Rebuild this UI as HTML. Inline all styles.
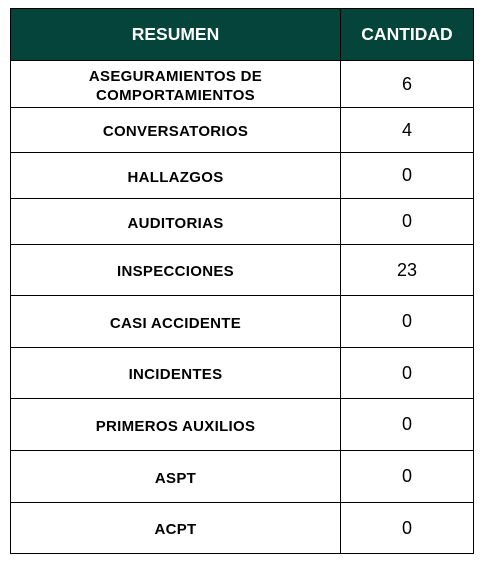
<!DOCTYPE html>
<html><head><style>
body{margin:0;width:486px;height:565px;background:#fff;font-family:"Liberation Sans",Arial,sans-serif;position:relative;overflow:hidden}
.h{position:absolute;top:8px;height:53px;background:#04443a;color:#fff;font-weight:bold;font-size:17.5px;display:flex;align-items:center;justify-content:center;box-sizing:border-box;border:1px solid #000}
.c{position:absolute;display:flex;align-items:center;justify-content:center;text-align:center;box-sizing:border-box;border:1px solid #000;color:#000}
.l{left:10px;width:331px;font-weight:bold;font-size:15px;line-height:19px;letter-spacing:0.3px;padding-top:3px}
.r{left:340px;width:134px;font-size:18px}
</style></head><body>
<div class="h" style="left:10px;width:331px">RESUMEN</div>
<div class="h" style="left:340px;width:134px">CANTIDAD</div>
<div class="c l" style="top:60px;height:48px">ASEGURAMIENTOS DE<br>COMPORTAMIENTOS</div><div class="c r" style="top:60px;height:48px">6</div>
<div class="c l" style="top:107px;height:46px">CONVERSATORIOS</div><div class="c r" style="top:107px;height:46px">4</div>
<div class="c l" style="top:152px;height:47px">HALLAZGOS</div><div class="c r" style="top:152px;height:47px">0</div>
<div class="c l" style="top:198px;height:47px">AUDITORIAS</div><div class="c r" style="top:198px;height:47px">0</div>
<div class="c l" style="top:244px;height:52px">INSPECCIONES</div><div class="c r" style="top:244px;height:52px">23</div>
<div class="c l" style="top:295px;height:53px">CASI ACCIDENTE</div><div class="c r" style="top:295px;height:53px">0</div>
<div class="c l" style="top:347px;height:52px">INCIDENTES</div><div class="c r" style="top:347px;height:52px">0</div>
<div class="c l" style="top:398px;height:53px">PRIMEROS AUXILIOS</div><div class="c r" style="top:398px;height:53px">0</div>
<div class="c l" style="top:450px;height:53px">ASPT</div><div class="c r" style="top:450px;height:53px">0</div>
<div class="c l" style="top:502px;height:52px">ACPT</div><div class="c r" style="top:502px;height:52px">0</div>
</body></html>
